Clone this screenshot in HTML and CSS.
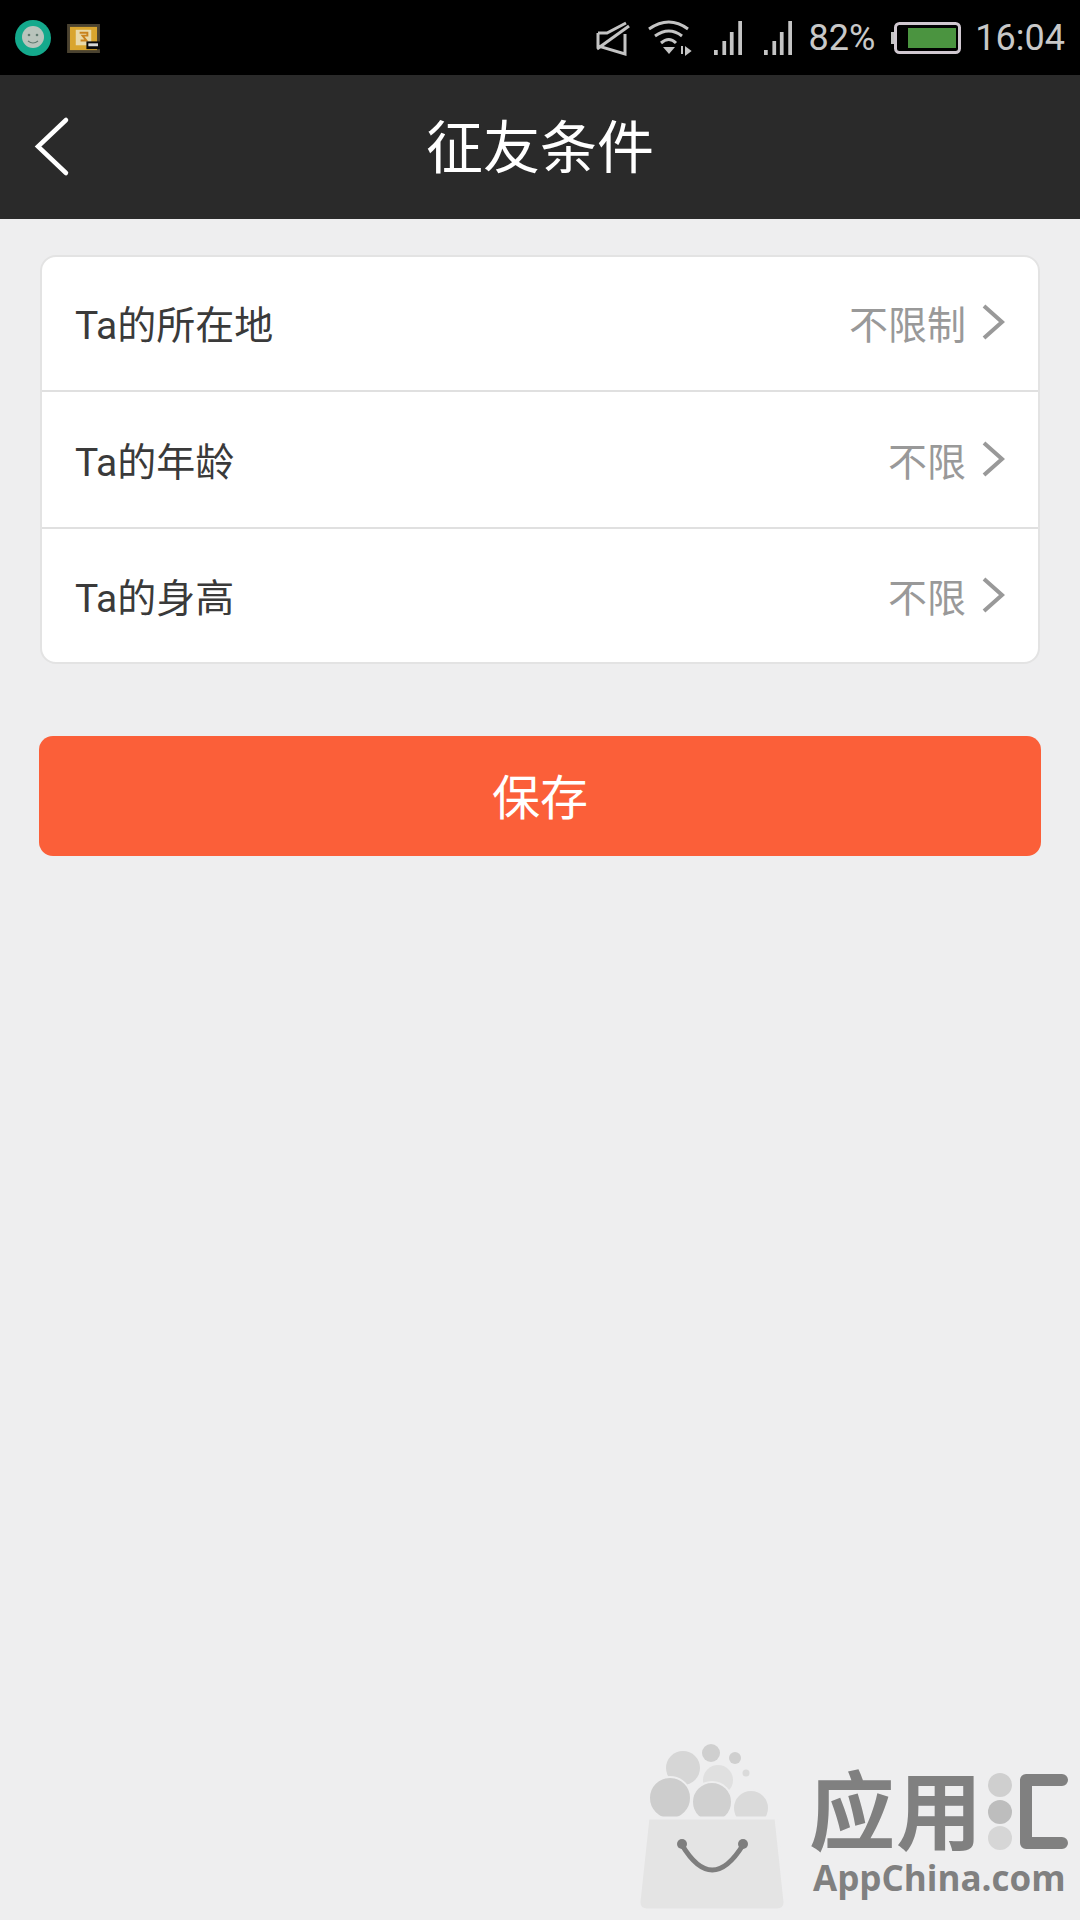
FILE: index.html
```html
<!DOCTYPE html>
<html lang="zh-CN">
<head>
    <meta charset="UTF-8">
    <meta name="viewport" content="width=device-width, initial-scale=1.0">
    <title>征友条件</title>
    <link rel="stylesheet" href="styles.css">
</head>
<body>
    <div class="status-bar">
        <div class="status-left">
            <svg class="app-icon" width="38" height="38" viewBox="0 0 38 38">
                <circle cx="19" cy="19" r="18" fill="#14a98c"/>
                <circle cx="19" cy="18" r="11" fill="#b9c4bc"/>
                <circle cx="15" cy="16" r="1.3" fill="#5f7a70"/>
                <circle cx="23" cy="16" r="1.3" fill="#5f7a70"/>
                <path d="M14 22q5 4 10 0" fill="none" stroke="#5f7a70" stroke-width="1.2"/>
            </svg>
            <svg class="app-icon" width="33" height="29" viewBox="0 0 34 30">
                <rect x="0" y="0" width="34" height="30" fill="#4a4230"/>
                <rect x="3" y="3" width="28" height="24" fill="#d9a52e"/>
                <rect x="9" y="6" width="16" height="16" fill="#e9d9a8"/>
                <path d="M13 9h8v3h-5l4 5h-6" fill="none" stroke="#c9821c" stroke-width="2"/>
                <rect x="20" y="18" width="14" height="8" fill="#0a0a0a"/>
                <rect x="22" y="20" width="10" height="3" fill="#d8d8d8"/>
            </svg>
        </div>
        <div class="status-right">
            <svg class="mute-icon" width="36" height="36" viewBox="0 0 36 36" fill="none" stroke="#c4c4c4" stroke-width="3">
                <path d="M34 6 2 29"/>
                <path d="M3 13h9L31 3"/>
                <path d="M3 13v13l27 8V14"/>
            </svg>
            <svg class="wifi-icon" width="44" height="36" viewBox="0 0 44 36" fill="none" stroke="#c4c4c4" stroke-width="3">
                <path d="M1 9Q21-5 40 9"/>
                <path d="M7 16Q21 6 34 16"/>
                <path d="M13 23Q21 16 28 23"/>
                <path d="M15 27h12l-6 7z" fill="#c4c4c4" stroke="none"/>
                <path d="M34 26v8M38 28l4 3-4 3z" stroke-width="2" fill="#c4c4c4"/>
            </svg>
            <svg class="signal-icon" width="28" height="36" viewBox="0 0 30 36" preserveAspectRatio="none" fill="#c4c4c4">
                <rect x="0" y="30" width="4" height="5"/>
                <rect x="9" y="21" width="4" height="14"/>
                <rect x="17" y="12" width="4" height="23"/>
                <rect x="26" y="1" width="4" height="34"/>
            </svg>
            <svg class="signal-icon" width="28" height="36" viewBox="0 0 30 36" preserveAspectRatio="none" fill="#c4c4c4">
                <rect x="0" y="30" width="4" height="5"/>
                <rect x="9" y="21" width="4" height="14"/>
                <rect x="17" y="12" width="4" height="23"/>
                <rect x="26" y="1" width="4" height="34"/>
            </svg>
            <span class="status-text battery-text">82%</span>
            <svg class="battery-icon" width="70" height="32" viewBox="0 0 70 32">
                <rect x="0" y="10" width="4" height="12" fill="#c4c4c4"/>
                <rect x="4.5" y="1.5" width="64" height="29" rx="4" fill="none" stroke="#d0c8d0" stroke-width="3"/>
                <rect x="17" y="6" width="48" height="20" fill="#4b9440"/>
            </svg>
            <span class="status-text">16:04</span>
        </div>
    </div>

    <div class="header">
        <svg class="back-icon" width="36" height="62" viewBox="0 0 36 62" fill="none" stroke="#fff" stroke-width="4.5" stroke-linecap="round" stroke-linejoin="miter">
            <path d="M32 4 4 30.5 32 57"/>
        </svg>
        <h1>征友条件</h1>
    </div>

    <div class="content">
        <div class="card">
            <div class="row">
                <span class="row-label">Ta的所在地</span>
                <span class="row-value">不限制</span>
                <svg class="chevron" width="24" height="36" viewBox="0 0 24 36" fill="none" stroke="#999" stroke-width="4">
                    <path d="M3 2l18 16L3 34"/>
                </svg>
            </div>
            <div class="row">
                <span class="row-label">Ta的年龄</span>
                <span class="row-value">不限</span>
                <svg class="chevron" width="24" height="36" viewBox="0 0 24 36" fill="none" stroke="#999" stroke-width="4">
                    <path d="M3 2l18 16L3 34"/>
                </svg>
            </div>
            <div class="row">
                <span class="row-label">Ta的身高</span>
                <span class="row-value">不限</span>
                <svg class="chevron" width="24" height="36" viewBox="0 0 24 36" fill="none" stroke="#999" stroke-width="4">
                    <path d="M3 2l18 16L3 34"/>
                </svg>
            </div>
        </div>
        <button class="save-btn">保存</button>
    </div>

    <!-- store watermark, bottom right corner -->
    <svg class="watermark" width="460" height="190" viewBox="0 0 460 190">
        <circle cx="63" cy="38" r="17" fill="#d6d6d6"/>
        <circle cx="91" cy="23" r="9" fill="#cfcfcf"/>
        <circle cx="115" cy="28" r="6" fill="#cfcfcf"/>
        <circle cx="126" cy="43" r="3.5" fill="#dadada"/>
        <circle cx="98" cy="50" r="15" fill="#e0e0e0"/>
        <circle class="wm-ball" cx="50" cy="68" r="21" fill="#cdcdcd"/>
        <circle class="wm-ball" cx="92" cy="72" r="20" fill="#d0d0d0"/>
        <circle class="wm-ball" cx="131" cy="78" r="18" fill="#dadada"/>
        <path class="wm-bag" d="M28 88h128l9 84q0 8-8 8H27q-8 0-8-8z" fill="#e4e4e4"/>
        <path d="M62 115q30 50 61 0" fill="none" stroke="#7e7e7e" stroke-width="5" stroke-linecap="round"/>
        <circle cx="62" cy="114" r="5" fill="#7e7e7e"/>
        <circle cx="123" cy="114" r="5" fill="#7e7e7e"/>
        <text class="wm-cn" x="189" y="114">应</text>
        <text class="wm-cn" x="276" y="114">用</text>
        <circle cx="380" cy="55" r="12" fill="#cfcfcf"/>
        <circle cx="380" cy="82" r="12" fill="#bdbdbd"/>
        <circle cx="380" cy="108" r="12" fill="#d6d6d6"/>
        <path d="M442 50h-36v63h36" fill="none" stroke="#808080" stroke-width="12" stroke-linecap="round" stroke-linejoin="round"/>
        <text class="wm-en" x="193" y="161">AppChina.com</text>
    </svg>
</body>
</html>
```
FILE: styles.css
```css
* { box-sizing: border-box; }
html, body { margin: 0; padding: 0; }
body {
    width: 1080px;
    height: 1920px;
    position: relative;
    overflow: hidden;
    background-color: #eeeeef;
    font-family: Roboto, "Noto Sans CJK SC", sans-serif;
}

.status-bar {
    height: 75px;
    background-color: #000;
    display: flex;
    align-items: center;
    justify-content: space-between;
    padding: 1px 15px 0 14px;
}
.status-left, .status-right { display: flex; align-items: center; }
.status-left { gap: 15px; }
.app-icon { display: block; }
.status-right svg { display: block; }
.mute-icon { margin-right: 17px; }
.wifi-icon { margin-right: 22px; }
.signal-icon { margin-right: 22px; }
.battery-text { margin-left: -5px; }
.battery-icon { margin: 0 14px 0 16px; }
.status-text { color: #c8c8c8; font-size: 36px; line-height: 40px; }

.header {
    height: 144px;
    background-color: #2a2a2a;
    position: relative;
    display: flex;
    align-items: center;
    justify-content: center;
    padding-bottom: 8px;
}
.header h1 {
    margin: 0;
    color: #fff;
    font-size: 57px;
    font-weight: 400;
}
.back-icon { position: absolute; left: 34px; top: 41px; }

.content { padding: 36px 39px 0; }
.card {
    background-color: #fff;
    border: 2px solid #e3e3e3;
    border-radius: 16px;
    margin: 0 1px;
}
.row {
    height: 137px;
    display: flex;
    align-items: center;
    padding: 0 33px 2px;
    border-bottom: 2px solid #e0e0e0;
}
.row:first-child { height: 135px; padding-bottom: 4px; }
.row:last-child { height: 133px; border-bottom: none; padding-bottom: 2px; }
.row-label { color: #3a3a3a; font-size: 39px; flex: 1; }
.row-value { color: #999; font-size: 39px; margin-right: 15px; }
.chevron { display: block; }

.save-btn {
    display: block;
    width: 100%;
    height: 120px;
    margin-top: 72px;
    padding: 0 0 5px;
    border: none;
    border-radius: 14px;
    background-color: #fb5f39;
    color: #fff;
    font-family: inherit;
    font-size: 48px;
    cursor: pointer;
}

.watermark { position: absolute; right: 0; bottom: 0; display: block; }
.wm-ball { stroke: #eeeeef; stroke-width: 2; }
.wm-bag { stroke: #eeeeef; stroke-width: 3; }
.wm-cn {
    fill: #808080;
    font-family: "Noto Sans CJK SC", sans-serif;
    font-size: 86px;
    font-weight: 700;
}
.wm-en {
    fill: #808080;
    font-family: "Open Sans", sans-serif;
    font-size: 35px;
    font-weight: 700;
}
```
